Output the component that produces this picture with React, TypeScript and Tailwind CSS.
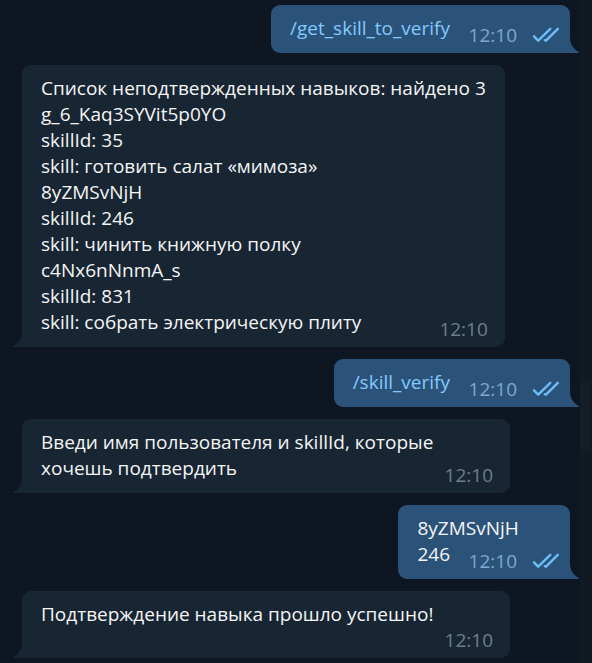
import type { ReactNode } from "react";

type Message = {
  id: number;
  outgoing?: boolean;
  command?: boolean;
  lines: string[];
  time: string;
};

const messages: Message[] = [
  { id: 1, outgoing: true, command: true, lines: ["/get_skill_to_verify"], time: "12:10" },
  {
    id: 2,
    lines: [
      "Список неподтвержденных навыков: найдено 3",
      "g_6_Kaq3SYVit5p0YO",
      "skillId: 35",
      "skill: готовить салат «мимоза»",
      "8yZMSvNjH",
      "skillId: 246",
      "skill: чинить книжную полку",
      "c4Nx6nNnmA_s",
      "skillId: 831",
      "skill: собрать электрическую плиту",
    ],
    time: "12:10",
  },
  { id: 3, outgoing: true, command: true, lines: ["/skill_verify"], time: "12:10" },
  { id: 4, lines: ["Введи имя пользователя и skillId, которые хочешь подтвердить"], time: "12:10" },
  { id: 5, outgoing: true, lines: ["8yZMSvNjH", "246"], time: "12:10" },
  { id: 6, lines: ["Подтверждение навыка прошло успешно!"], time: "12:10" },
];

function ReadTicks() {
  return (
    <svg
      className="h-4 w-7 text-[#6cbcf8]"
      viewBox="0 0 28 16"
      fill="none"
      stroke="currentColor"
      strokeWidth="2.4"
      strokeLinecap="round"
      strokeLinejoin="round"
      role="img"
      aria-label="Прочитано"
    >
      <path d="M3 9.3L7.2 13.7L19.3 1.8" />
      <path d="M13.8 13.2L15 13.7L26.8 1.8" />
    </svg>
  );
}

function Tail({ outgoing }: { outgoing?: boolean }) {
  return outgoing ? (
    <svg className="absolute bottom-0 left-full h-4 w-[9px] text-[#2b5278]" viewBox="0 0 9 16" aria-hidden="true">
      <path d="M0 0C0 7 3 12 9 15V16H0Z" fill="currentColor" />
    </svg>
  ) : (
    <svg className="absolute right-full bottom-0 h-4 w-[9px] text-[#182533]" viewBox="0 0 9 16" aria-hidden="true">
      <path d="M9 0C9 7 6 12 0 15V16H9Z" fill="currentColor" />
    </svg>
  );
}

function Bubble({ message }: { message: Message }) {
  const { outgoing, command, lines, time } = message;
  const text: ReactNode = lines.map((line, i) => (
    <span key={line}>
      {i > 0 && <br />}
      {command ? (
        <a href="#command" className="text-[#83caff]">
          {line}
        </a>
      ) : (
        line
      )}
    </span>
  ));
  return (
    <li
      className={
        outgoing
          ? "relative max-w-[488px] self-end rounded-[9px] rounded-br-none bg-[#2b5278] px-[19px] pt-[10px] pb-3"
          : "relative max-w-[488px] self-start rounded-[9px] rounded-bl-none bg-[#182533] px-[19px] pt-[10px] pb-3"
      }
    >
      <div className="flow-root">
        {text}
        <span className={outgoing ? "float-right h-[19px] w-[101px]" : "float-right h-[19px] w-[63px]"} />
      </div>
      <div
        className={
          outgoing
            ? "absolute right-[11px] bottom-[5px] flex items-center gap-[14px] text-[#7da8d3]"
            : "absolute right-[17px] bottom-[5px] text-[#6d7f8f]"
        }
      >
        <time>{time}</time>
        {outgoing && <ReadTicks />}
      </div>
      <Tail outgoing={outgoing} />
    </li>
  );
}

export default function App() {
  return (
    <main className="flex min-h-screen bg-[#0e1621] font-['Open_Sans','Noto_Sans',sans-serif] text-[19px] leading-[26px] text-[#f5f5f5]">
      <ul className="flex flex-1 flex-col gap-3 py-[5px] pr-[10px] pl-[22px]">
        {messages.map((m) => (
          <Bubble key={m.id} message={m} />
        ))}
      </ul>
      <div className="flex w-3 flex-col bg-[#111a23]" aria-hidden="true">
        <div className="mt-[381px] h-[70px] w-[10px] rounded bg-[#151e27]" />
      </div>
    </main>
  );
}
